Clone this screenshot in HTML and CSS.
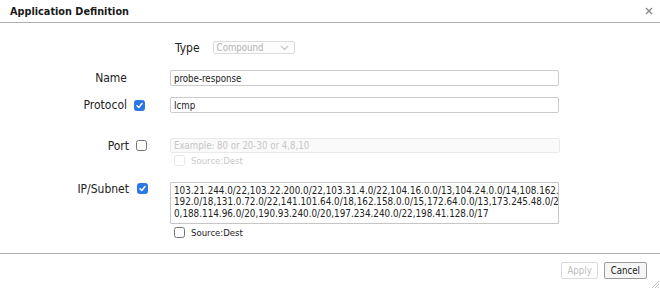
FILE: index.html
```html
<!DOCTYPE html>
<html>
<head>
<meta charset="utf-8">
<link rel="stylesheet" href="styles.css">
</head>
<body>
<div class="dialog">
  <header class="dlg-header">
    <span class="title">Application Definition</span>
    <svg class="close" width="8" height="8" viewBox="0 0 8 8"><path d="M1 1L7 7M7 1L1 7" stroke="#8a8a8a" stroke-width="1.4" fill="none"/></svg>
  </header>
  <main class="dlg-body">
    <div class="row-type">
      <span class="type-label">Type</span>
      <div class="select">
        <span>Compound</span>
        <svg width="9" height="6" viewBox="0 0 9 6"><path d="M1 1L4.5 4.5L8 1" stroke="#c4c4c4" stroke-width="1.1" fill="none"/></svg>
      </div>
    </div>
    <div class="row row-name">
      <span class="lbl">Name</span>
      <span class="cb-slot"></span>
      <input class="field" type="text" value="probe-response">
    </div>
    <div class="row row-proto">
      <span class="lbl">Protocol</span>
      <span class="cb checked"><svg width="9" height="9" viewBox="0 0 9 9"><path d="M2 4.8L3.8 6.5L7 2.6" stroke="#fff" stroke-width="1.5" fill="none" stroke-linecap="round" stroke-linejoin="round"/></svg></span>
      <input class="field" type="text" value="Icmp">
    </div>
    <div class="row row-port">
      <span class="lbl lbl-wide">Port</span>
      <span class="cb"></span>
      <input class="field field-wide" type="text" placeholder="Example: 80 or 20-30 or 4,8,10" disabled>
    </div>
    <div class="sub sub-port">
      <span class="cb disabled"></span>
      <span class="sub-text muted">Source:Dest</span>
    </div>
    <div class="row row-ip">
      <span class="lbl lbl-wide">IP/Subnet</span>
      <span class="cb checked cb-ip"><svg width="9" height="9" viewBox="0 0 9 9"><path d="M2 4.8L3.8 6.5L7 2.6" stroke="#fff" stroke-width="1.5" fill="none" stroke-linecap="round" stroke-linejoin="round"/></svg></span>
      <textarea class="area">103.21.244.0/22,103.22.200.0/22,103.31.4.0/22,104.16.0.0/13,104.24.0.0/14,108.162.
192.0/18,131.0.72.0/22,141.101.64.0/18,162.158.0.0/15,172.64.0.0/13,173.245.48.0/2
0,188.114.96.0/20,190.93.240.0/20,197.234.240.0/22,198.41.128.0/17</textarea>
    </div>
    <div class="sub sub-ip">
      <span class="cb"></span>
      <span class="sub-text">Source:Dest</span>
    </div>
  </main>
  <footer class="dlg-footer">
    <button class="btn" disabled>Apply</button>
    <button class="btn btn-cancel">Cancel</button>
    <svg class="grip" width="8" height="8" viewBox="0 0 8 8"><path d="M8 1L1 8M8 4L4 8M8 7L7 8" stroke="#b5b5b5" stroke-width="0.8" fill="none"/></svg>
  </footer>
</div>
</body>
</html>
```
FILE: styles.css
```css
* { box-sizing: border-box; }
html, body { margin: 0; padding: 0; background: #fff; }
body {
  font-family: "DejaVu Sans Condensed", "Liberation Sans", sans-serif;
  color: #222;
}
.dialog {
  position: relative;
  width: 660px;
  height: 289px;
  display: flex;
  flex-direction: column;
  background: #fff;
}
.dlg-header {
  height: 23px;
  border-bottom: 1px solid #adadad;
  display: flex;
  align-items: center;
  justify-content: space-between;
  padding: 0 7px 0 10px;
}
.title {
  font-weight: bold;
  font-size: 10.8px;
  color: #1a1a1a;
  margin-top: 1px;
}
.close { display: block; margin-top: 0; }
.dlg-body {
  flex: 1;
  display: flex;
  flex-direction: column;
}
.row-type {
  display: flex;
  align-items: center;
  padding-left: 175px;
  margin-top: 18px;
  height: 13px;
}
.type-label {
  font-size: 12px;
  color: #222;
  margin-right: 13px;
}
.select {
  width: 82px;
  height: 13px;
  border: 1px solid #dcdcdc;
  border-radius: 2px;
  background: #fcfcfc;
  display: flex;
  align-items: center;
  justify-content: space-between;
  padding: 0 5px 0 3px;
  font-size: 9.6px;
  color: #b3b3b3;
}
.row {
  display: flex;
  align-items: center;
}
.row-name { margin-top: 16px; }
.row-proto { margin-top: 11px; }
.row-port { margin-top: 25px; }
.row-ip { margin-top: 16px; align-items: flex-start; }
.lbl {
  width: 127px;
  text-align: right;
  font-size: 12px;
  color: #222;
  flex: none;
}
.lbl-wide { width: 129px; }
.cb-slot { width: 11px; margin-left: 7px; flex: none; }
.cb {
  width: 11px;
  height: 11px;
  margin-left: 7px;
  flex: none;
  border: 1px solid #737373;
  border-radius: 2.5px;
  background: #fff;
  display: flex;
  align-items: center;
  justify-content: center;
}
.cb.checked { background: #2a78e4; border-color: #2a78e4; }
.cb.disabled { border-color: #e6e6e6; }
.cb-ip { margin-top: 1px; margin-left: 8px; }
.row-port .cb { margin-left: 7px; }
.field {
  margin-left: 25px;
  width: 389px;
  height: 16px;
  border: 1px solid #cbcbcb;
  border-radius: 2px;
  padding: 0 3px;
  font-family: inherit;
  font-size: 9.6px;
  color: #222;
  background: #fff;
  outline: none;
}
.row-port .cb + .field, .row-port .field { margin-left: 23px; }
.field-wide { width: 390px; height: 15px; background: #fafafa; border-color: #e9e9e9; }
.field-wide::placeholder { color: #c6c6c6; }
.area {
  margin-left: 22px;
  width: 389px;
  height: 42px;
  border: 1px solid #c6c6c6;
  border-radius: 1px;
  padding: 2px 3px 0;
  font-family: inherit;
  font-size: 9.8px;
  line-height: 11.4px;
  color: #222;
  resize: none;
  overflow: hidden;
  white-space: pre;
  outline: none;
}
.sub {
  display: flex;
  align-items: center;
  padding-left: 174px;
  height: 11px;
}
.sub .cb { margin-left: 0; }
.sub-port { margin-top: 2px; }
.sub-ip { margin-top: 3px; }
.sub-text {
  margin-left: 6px;
  font-size: 9.5px;
  color: #222;
}
.muted { color: #c9c9c9; }
.dlg-footer {
  height: 36px;
  border-top: 1px solid #adadad;
  display: flex;
  justify-content: flex-end;
  align-items: flex-start;
  padding: 8px 13px 0 0;
  gap: 6px;
}
.btn {
  height: 17px;
  padding: 0 5px;
  border: 1px solid #dadada;
  border-radius: 2px;
  background: #fff;
  font-family: inherit;
  font-size: 9.6px;
  color: #bdbdbd;
  line-height: 15px;
}
.btn-cancel {
  border-color: #9c9c9c;
  background: #f6f6f6;
  color: #222;
  padding: 0 6px;
}
.grip {
  position: absolute;
  right: 1px;
  bottom: 1px;
}
```
